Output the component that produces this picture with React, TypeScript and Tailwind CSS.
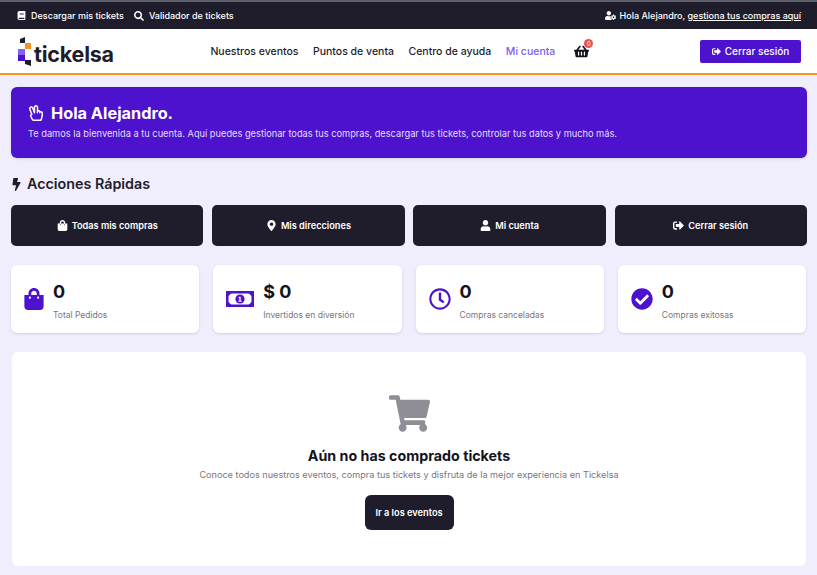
import { FaBook, FaSearch, FaUserCog, FaShoppingBasket, FaSignOutAlt, FaRegHandPeace, FaBolt, FaShoppingBag, FaMapMarkerAlt, FaUser, FaRegClock, FaCheckCircle, FaShoppingCart } from 'react-icons/fa'

const actions = [
  { label: 'Todas mis compras', icon: <FaShoppingBag size={11} /> },
  { label: 'Mis direcciones', icon: <FaMapMarkerAlt size={11} /> },
  { label: 'Mi cuenta', icon: <FaUser size={11} /> },
  { label: 'Cerrar sesión', icon: <FaSignOutAlt size={11} /> },
]

function MoneyIcon() {
  return (
    <svg width="28" height="22" viewBox="0 0 28 22" fill="none">
      <rect x="1.25" y="4.25" width="25.5" height="13.5" stroke="#4d12cd" strokeWidth="2.5" />
      <path d="M2 5h3.5L2 8.5zM26 5h-3.5L26 8.5zM2 17h3.5L2 13.5zM26 17h-3.5L26 13.5z" fill="#4d12cd" />
      <circle cx="14" cy="11" r="4.6" fill="#4d12cd" />
      <path d="M13 8.8h1.7v3.9h1v1.1h-3.4v-1.1h1v-2.6h-1z" fill="#fff" />
    </svg>
  )
}

const stats = [
  { value: '0', label: 'Total Pedidos', icon: <FaShoppingBag size={22} className="-mx-px" /> },
  { value: '$ 0', label: 'Invertidos en diversión', icon: <MoneyIcon /> },
  { value: '0', label: 'Compras canceladas', icon: <FaRegClock size={22} /> },
  { value: '0', label: 'Compras exitosas', icon: <FaCheckCircle size={22} /> },
]

function Logo() {
  return (
    <div className="flex items-end gap-[2px]">
      <svg width="14" height="29" viewBox="0 0 14 29">
        <path d="M2 2l5-2v6H2z" fill="#1f1d2b" />
        <rect x="7" y="6" width="6" height="6" fill="#f7941d" />
        <rect x="0" y="12" width="7" height="6" fill="#8a5cf0" />
        <rect x="0" y="18" width="7" height="6" fill="#4d12cd" />
        <path d="M7 23h6v6l-6-2z" fill="#1f1d2b" />
      </svg>
      <span className="text-[21.5px] leading-[24px] font-bold text-[#1f1d2b] tracking-[-0.2px]">tickelsa</span>
    </div>
  )
}

export default function App() {
  return (
    <div className="min-h-[575px] bg-[#f0eefd] font-['Inter',sans-serif] overflow-hidden">
      <div className="h-[29px] border-t-2 border-[#5f5e6b] bg-[#1f1d2b] text-white text-[9px] font-medium flex items-center justify-between pl-[17px] pr-[16px]">
        <div className="flex items-center gap-[10px]">
          <span className="flex items-center gap-[5px]"><FaBook size={9} />Descargar mis tickets</span>
          <span className="flex items-center gap-[5px]"><FaSearch size={10} />Validador de tickets</span>
        </div>
        <span className="flex items-center gap-[4px]">
          <FaUserCog size={11} />
          <span>Hola Alejandro, <span className="underline">gestiona tus compras aquí</span></span>
        </span>
      </div>

      <div className="h-[46px] bg-white border-b-2 border-[#f7941d] flex items-center pl-[18px] pr-[16px]">
        <Logo />
        <nav className="ml-[96.5px] mt-[1px] flex items-center gap-[14.5px] text-[10.5px] font-medium text-[#1f1d2b]">
          <span>Nuestros eventos</span>
          <span>Puntos de venta</span>
          <span>Centro de ayuda</span>
          <span className="text-[#7c5cf0]">Mi cuenta</span>
        </nav>
        <div className="relative ml-[19px]">
          <FaShoppingBasket size={15} className="text-[#14121c]" />
          <span className="absolute -top-[5px] left-[10px] w-[9px] h-[9px] rounded-full bg-[#e25555] text-white text-[6px] leading-[9px] text-center">0</span>
        </div>
        <button className="ml-auto w-[101px] h-[23px] bg-[#4d12cd] rounded-[2px] text-white text-[10px] font-medium flex items-center justify-center gap-[4px]">
          <FaSignOutAlt size={9} />Cerrar sesión
        </button>
      </div>

      <div className="pl-[11px] pt-[12px] pr-[10px]">
        <div className="h-[71px] rounded-[6px] bg-[#4d12cd] text-white pl-[17px] pt-[16px] shadow-sm">
          <div className="flex items-center gap-[7px]">
            <FaRegHandPeace size={16} />
            <span className="text-[16.3px] leading-[20px] font-bold">Hola Alejandro.</span>
          </div>
          <p className="mt-[5px] text-[9.25px] leading-[12px] text-[#e6dff9]">Te damos la bienvenida a tu cuenta. Aquí puedes gestionar todas tus compras, descargar tus tickets, controlar tus datos y mucho más.</p>
        </div>

        <div className="mt-[17px] -ml-px flex items-center gap-[4px] h-[18px] text-[#1f1d2b]">
          <FaBolt size={13} />
          <span className="text-[14.3px] font-semibold">Acciones Rápidas</span>
        </div>

        <div className="mt-[12px] grid grid-cols-4 gap-[8.75px]">
          {actions.map((a) => (
            <button key={a.label} className="h-[41px] rounded-[5px] bg-[#1f1d2b] text-white text-[9.2px] font-semibold flex items-center justify-center gap-[4px]">
              {a.icon}{a.label}
            </button>
          ))}
        </div>

        <div className="mt-[19px] grid grid-cols-4 gap-[14px] pr-[1px]">
          {stats.map((s) => (
            <div key={s.label} className="h-[68px] rounded-[6px] bg-white shadow-sm flex items-start gap-[9px] pl-[13px] pt-[17px]">
              <div className="mt-[6px] text-[#4d12cd] shrink-0">{s.icon}</div>
              <div>
                <div className="text-[18px] leading-[20px] font-bold text-[#14121c]">{s.value}</div>
                <div className="mt-[8px] text-[8.5px] leading-[10px] text-[#77757f]">{s.label}</div>
              </div>
            </div>
          ))}
        </div>

        <div className="mt-[19px] mx-px h-[214px] rounded-[6px] bg-white flex flex-col items-center pt-[41px]">
          <FaShoppingCart size={41} className="text-[#8f8e96]" />
          <h2 className="mt-[13px] text-[14.25px] leading-[18px] font-bold text-[#14121c]">Aún no has comprado tickets</h2>
          <p className="mt-[4px] text-[9.15px] leading-[12px] text-[#77757f]">Conoce todos nuestros eventos, compra tus tickets y disfruta de la mejor experiencia en Tickelsa</p>
          <button className="mt-[14px] w-[89px] h-[35px] rounded-[6px] bg-[#1f1d2b] text-white text-[9.25px] font-semibold">Ir a los eventos</button>
        </div>
      </div>
    </div>
  )
}
